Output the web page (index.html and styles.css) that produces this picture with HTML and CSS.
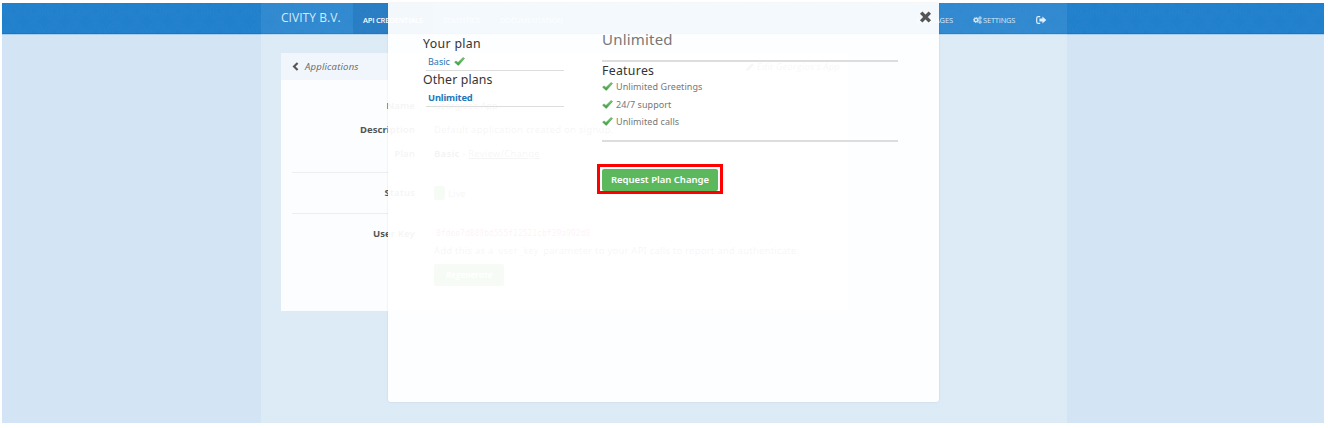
FILE: index.html
```html
<!DOCTYPE html>
<html lang="en">
<head>
<meta charset="utf-8">
<title>Civity B.V. - Applications</title>
<link rel="stylesheet" href="styles.css">
</head>
<body>
<svg class="defs" width="0" height="0">
  <defs>
    <linearGradient id="green" x1="0" y1="0" x2="0" y2="1"><stop offset="0" stop-color="#7bcb79"/><stop offset="1" stop-color="#3c9a40"/></linearGradient>
    <symbol id="check" viewBox="0 0 11 9"><path d="M.6 5.2 2 3.9 4 5.5 9.1.5 10.5 1.5 4.3 8.4Z" fill="url(#green)" stroke="#4b9f4c" stroke-width=".6" stroke-linejoin="round"/></symbol>
  </defs>
</svg>
<div class="page">
  <svg class="rings" width="1322" height="31" aria-hidden="true">
    <defs><pattern id="ring" width="20.6" height="20.6" patternUnits="userSpaceOnUse" patternTransform="translate(1 -2)"><g fill="none" stroke="#3f91d2" stroke-opacity=".2" stroke-width=".8"><circle cx="10.3" cy="10.3" r="9.3"/><circle cx="10.3" cy="10.3" r="6.5"/><circle cx="10.3" cy="10.3" r="3.8"/></g></pattern></defs>
    <rect width="1322" height="31" fill="url(#ring)"/>
  </svg>
  <div class="column">
    <nav class="nav">
      <span class="brand">CIVITY B.V.</span>
      <span class="tab active"><b>API CREDENTIALS</b></span>
      <span class="tab">STATISTICS</span>
      <span class="tab">DOCUMENTATION</span>
      <span class="spacer"></span>
      <span class="tool messages">MESSAGES</span>
      <span class="tool settings"><svg width="9" height="8" viewBox="0 0 9 8"><g fill="none" stroke="#d7e9f7"><circle cx="3" cy="4" r="1.7" stroke-width="1.3"/><circle cx="3" cy="4" r="2.6" stroke-width="1" stroke-dasharray="1 1.04"/><circle cx="7.1" cy="2" r="1" stroke-width=".9"/><circle cx="7.1" cy="2" r="1.6" stroke-width=".6" stroke-dasharray=".65 .6"/><circle cx="7.1" cy="6" r="1" stroke-width=".9"/><circle cx="7.1" cy="6" r="1.6" stroke-width=".6" stroke-dasharray=".65 .6"/></g></svg>SETTINGS</span>
      <svg class="logout" width="11" height="8" viewBox="0 0 11 8"><path d="M4.2.7H2.3Q.7.7.7 2.3v3.4q0 1.6 1.6 1.6h1.9" fill="none" stroke="#e2effa" stroke-width="1.2"/><path d="M3.4 2.5h3V.4L10.3 4 6.4 7.6V5.5h-3Z" fill="#e2effa"/></svg>
    </nav>
    <main class="card">
      <header class="card-head">
        <svg width="7" height="9" viewBox="0 0 7 9"><path d="M5.6 1 2 4.5 5.6 8" fill="none" stroke="#555" stroke-width="2.1"/></svg>
        <span class="crumb">Applications</span>
        <span class="edit"><svg width="8" height="8" viewBox="0 0 8 8"><path d="M0 8 .6 5.4 5.5.5Q6 0 6.5.5L7.5 1.5Q8 2 7.5 2.5L2.6 7.4Z" fill="#777"/></svg>Edit Georgios's App</span>
      </header>
      <section class="group first">
        <div class="row"><b>Name</b><span class="v-name">Georgios's App</span></div>
        <div class="row"><b>Description</b><span class="v-desc">Default application created on signup.</span></div>
        <div class="row"><b>Plan</b><span class="v-plan"><strong>Basic</strong> › <u>Review/Change</u></span></div>
      </section>
      <section class="group status">
        <div class="row"><b>Status</b><span class="live"><i></i>Live</span></div>
      </section>
      <section class="group key">
        <div class="row"><b>User Key</b><code>0fdee7d889bd555f12521cbf39a992d0</code></div>
        <div class="hint">Add this as a <code>user_key</code> parameter to your API calls to report and authenticate.</div>
        <div class="regen">Regenerate</div>
      </section>
    </main>
  </div>
  <div class="modal">
    <svg class="close" width="13" height="12" viewBox="0 0 13 12"><path d="m2.2 1.6 8.6 8.8M10.8 1.6 2.2 10.4" stroke="#555" stroke-width="3.5"/></svg>
    <aside class="plans">
      <h2 class="yours">Your plan</h2>
      <div class="plan"><a class="basic">Basic</a><svg width="11" height="9"><use href="#check"/></svg></div>
      <h2 class="others">Other plans</h2>
      <div class="plan"><a class="current">Unlimited</a></div>
    </aside>
    <section class="detail">
      <h1><span>Unlimited</span></h1>
      <h2 class="features-title">Features</h2>
      <ul class="features">
        <li><svg width="11" height="9"><use href="#check"/></svg><span class="f1">Unlimited Greetings</span></li>
        <li><svg width="11" height="9"><use href="#check"/></svg><span class="f2">24/7 support</span></li>
        <li><svg width="11" height="9"><use href="#check"/></svg><span class="f3">Unlimited calls</span></li>
      </ul>
      <div class="highlight"><button class="request">Request Plan Change</button></div>
    </section>
  </div>
</div>
</body>
</html>
```
FILE: styles.css
```css
* { box-sizing: border-box; }
body { margin: 0; padding: 3px 4px 5px 2px; height: 428px; overflow: hidden; background: #fff; font-family: "Noto Sans", "Open Sans", sans-serif; font-size: 9.5px; color: #555; }
h1, h2, ul { margin: 0; padding: 0; font-weight: 400; }
svg { display: block; flex: none; }
.defs { position: absolute; }
.page { position: relative; height: 420px; background: linear-gradient(#2180cc 0 30px, #1975c0 30px 31px, #a4cdef 31px 32px, #d3e5f4 32px); }
.rings { position: absolute; top: 0; left: 0; }
.column { position: relative; width: 806px; height: 420px; margin-left: 259px; background: linear-gradient(rgba(255,255,255,.07) 0 31px, rgba(255,255,255,.22) 31px); }

.nav { display: flex; height: 31px; padding-left: 20px; align-items: center; color: #d7e9f7; font: 7.5px "Open Sans", sans-serif; white-space: nowrap; }
.brand { width: 72px; font: 500 12px/30px "Open Sans", sans-serif; letter-spacing: .05px; padding-bottom: 1px; }
.tab { height: 31px; line-height: 34px; padding-left: 10px; width: 57px; }
.tab.active { width: 80px; background: rgba(20,90,160,.25); color: #fff; }
.tab.active b { font-weight: 600; letter-spacing: -.2px; }
.tab + .tab { letter-spacing: -.15px; }
.spacer { flex: 1; }
.tool { line-height: 34px; height: 31px; letter-spacing: -.1px; }
.messages { width: 41px; margin-right: 20px; text-align: right; }
.settings { display: flex; align-items: center; gap: 1px; width: 44px; padding-top: 2px; line-height: 14px; letter-spacing: -.2px; }
.logout { margin: 2px 20px 0 19px; }

.card { margin: 19px 0 0 20px; width: 567px; height: 258px; background: #fcfdff; }
.card-head { display: flex; align-items: center; height: 27px; padding: 0 8px 0 11px; background: #f1f6fc; font: italic 9.5px "Open Sans", sans-serif; color: #666; }
.crumb { margin-left: 6px; letter-spacing: .2px; }
.edit { display: flex; align-items: center; gap: 3px; margin-left: auto; letter-spacing: .15px; }
.group { margin: 0 11px; border-bottom: 1px solid #eceff2; white-space: nowrap; }
.first { height: 93px; padding-top: 14px; }
.status { height: 41px; padding-top: 8px; }
.key { border: 0; padding-top: 8px; }
.row { display: grid; grid-template-columns: 123px auto; column-gap: 19px; height: 24px; line-height: 23px; }
.row b { text-align: right; letter-spacing: .05px; }
.row strong { color: #333; }
.row code { color: #d14; font: 8px/24px "DejaVu Sans Mono", monospace; padding-left: 2px; }
.v-name { padding-top: 1px; font-size: 9px; line-height: 22px; }
.v-desc { letter-spacing: .25px; }
.v-plan { letter-spacing: .22px; }
.live { display: flex; gap: 3px; align-items: center; }
.live i { width: 11px; height: 14px; background: #5cb85c; border-radius: 2px; }
.hint { margin: -3px 0 0 142px; line-height: 16px; height: 16px; letter-spacing: .22px; }
.hint code { font: 8px "DejaVu Sans Mono", monospace; padding: 0 2px; }
.regen { margin: 5px 0 0 142px; width: 70px; height: 22px; background: #5cb85c; border-radius: 2px; color: #fff; font: italic 600 9px/22px "Open Sans", sans-serif; text-align: center; }

.modal { position: absolute; left: 386px; top: 0; width: 551px; height: 399px; background: rgba(255,255,255,.945); border-radius: 0 0 3px 3px; box-shadow: 0 0 2px rgba(0,0,0,.12); display: flex; padding: 32px 41px 0 34px; }
.close { position: absolute; left: 531px; top: 8px; }
.plans { width: 142px; margin-right: 38px; }
h2 { color: #333; font-size: 12.3px; line-height: 17px; letter-spacing: .3px; }
.yours { padding-left: 1px; letter-spacing: .35px; }
.others { padding-left: 1px; letter-spacing: .15px; }
.plan { display: flex; align-items: center; gap: 4px; height: 19px; margin-left: 4px; padding-left: 2px; border-bottom: 1px solid #ddd; color: #2377b8; }
.basic { font-size: 9px; }
.plan svg { margin-top: 1px; }
.current { font-weight: 700; font-size: 9.3px; letter-spacing: -.15px; }
.detail { width: 296px; }
h1 { height: 27px; border-bottom: 2px solid #ddd; color: #777; font-size: 15px; line-height: 9px; letter-spacing: .2px; }
.features-title { margin-top: 1px; line-height: 16px; }
.features { list-style: none; color: #777; border-bottom: 2px solid #ddd; height: 63px; }
.features li { display: flex; gap: 3px; align-items: center; height: 17.4px; font-size: 9px; position: relative; top: -1px; letter-spacing: .08px; }
.highlight { margin: 22px 0 0 -5px; width: 126px; height: 30px; border: 3px solid #f00; padding: 2px; }
.request { display: block; width: 116px; height: 22px; padding: 0; border: 0; border-radius: 2px; background: #5cb85c; color: #fff; font: 600 9.5px/20px "Noto Sans", sans-serif; white-space: nowrap; }
```
